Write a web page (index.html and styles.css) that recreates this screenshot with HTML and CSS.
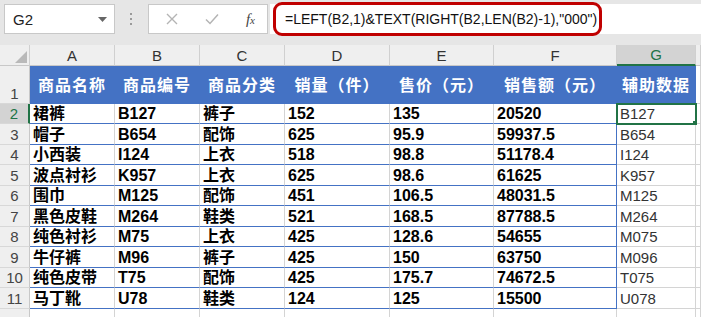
FILE: index.html
```html
<!DOCTYPE html>
<html lang="zh-CN">
<head>
    <meta charset="UTF-8">
    <title>辅助数据</title>
    <link rel="stylesheet" href="styles.css">
</head>
<body>
    <div class="toolbar">
        <div class="namebox">
            <span>G2</span>
            <svg class="caret" width="9" height="5" viewBox="0 0 9 5"><path d="M0 0h9L4.5 5z" fill="#666"/></svg>
        </div>
        <div class="grip">
            <svg width="3" height="12" viewBox="0 0 3 12"><rect x="0" y="0" width="2" height="2" fill="#9a9a9a"/><rect x="0" y="5" width="2" height="2" fill="#9a9a9a"/><rect x="0" y="10" width="2" height="2" fill="#9a9a9a"/></svg>
        </div>
        <div class="fxbox">
            <svg width="12" height="12" viewBox="0 0 12 12"><path d="M1 1l10 10M11 1L1 11" stroke="#b4b4b4" stroke-width="1.4"/></svg>
            <svg width="14" height="12" viewBox="0 0 14 12"><path d="M1 6.5l4 4L13 1.5" stroke="#b4b4b4" stroke-width="1.5" fill="none"/></svg>
            <span class="fx">f<span>x</span></span>
        </div>
        <div class="formula">
            <span class="formula-text">=LEFT(B2,1)&amp;TEXT(RIGHT(B2,LEN(B2)-1),"000")</span>
        </div>
    </div>

    <table class="sheet">
        <colgroup>
            <col class="c-rh"><col class="c-a"><col class="c-b"><col class="c-c"><col class="c-d"><col class="c-e"><col class="c-f"><col class="c-g"><col class="c-h">
        </colgroup>
        <tr class="colhead">
            <td class="corner"><svg width="12" height="12" viewBox="0 0 12 12"><path d="M12 0v12H0z" fill="#b9b9b9"/></svg></td>
            <td>A</td><td>B</td><td>C</td><td>D</td><td>E</td><td>F</td><td class="active">G</td><td></td>
        </tr>
        <tr class="head">
            <td class="rh">1</td>
            <td>商品名称</td><td>商品编号</td><td>商品分类</td><td>销量（件）</td><td>售价（元）</td><td>销售额（元）</td><td>辅助数据</td><td class="blank"></td>
        </tr>
        <tr class="row">
            <td class="rh active">2</td>
            <td>裙裤</td><td>B127</td><td>裤子</td><td>152</td><td>135</td><td class="last">20520</td><td class="aux selected">B127</td><td class="blank"></td>
        </tr>
        <tr class="row">
            <td class="rh">3</td>
            <td>帽子</td><td>B654</td><td>配饰</td><td>625</td><td>95.9</td><td class="last">59937.5</td><td class="aux">B654</td><td class="blank"></td>
        </tr>
        <tr class="row">
            <td class="rh">4</td>
            <td>小西装</td><td>I124</td><td>上衣</td><td>518</td><td>98.8</td><td class="last">51178.4</td><td class="aux">I124</td><td class="blank"></td>
        </tr>
        <tr class="row">
            <td class="rh">5</td>
            <td>波点衬衫</td><td>K957</td><td>上衣</td><td>625</td><td>98.6</td><td class="last">61625</td><td class="aux">K957</td><td class="blank"></td>
        </tr>
        <tr class="row">
            <td class="rh">6</td>
            <td>围巾</td><td>M125</td><td>配饰</td><td>451</td><td>106.5</td><td class="last">48031.5</td><td class="aux">M125</td><td class="blank"></td>
        </tr>
        <tr class="row">
            <td class="rh">7</td>
            <td>黑色皮鞋</td><td>M264</td><td>鞋类</td><td>521</td><td>168.5</td><td class="last">87788.5</td><td class="aux">M264</td><td class="blank"></td>
        </tr>
        <tr class="row">
            <td class="rh">8</td>
            <td>纯色衬衫</td><td>M75</td><td>上衣</td><td>425</td><td>128.6</td><td class="last">54655</td><td class="aux">M075</td><td class="blank"></td>
        </tr>
        <tr class="row">
            <td class="rh">9</td>
            <td>牛仔裤</td><td>M96</td><td>裤子</td><td>425</td><td>150</td><td class="last">63750</td><td class="aux">M096</td><td class="blank"></td>
        </tr>
        <tr class="row">
            <td class="rh">10</td>
            <td>纯色皮带</td><td>T75</td><td>配饰</td><td>425</td><td>175.7</td><td class="last">74672.5</td><td class="aux">T075</td><td class="blank"></td>
        </tr>
        <tr class="row">
            <td class="rh">11</td>
            <td>马丁靴</td><td>U78</td><td>鞋类</td><td>124</td><td>125</td><td class="last">15500</td><td class="aux">U078</td><td class="blank"></td>
        </tr>
        <tr class="tail">
            <td class="rh"></td><td></td><td></td><td></td><td></td><td></td><td></td><td></td><td></td>
        </tr>
    </table>
</body>
</html>
```

FILE: styles.css
```css
body { margin: 0; background: #ffffff; font-family: "Liberation Sans", "Noto Sans CJK SC", sans-serif; overflow: hidden; }

/* formula bar */
.toolbar { display: flex; align-items: flex-start; height: 45px; padding-top: 4px; box-sizing: border-box; background: #e6e6e6; }
.namebox { display: flex; align-items: center; justify-content: space-between; width: 111px; height: 30px; margin-left: 4px; padding: 0 7px 0 8px; box-sizing: border-box; background: #fff; border: 1px solid #c8c8c8; font-size: 15px; color: #222; }
.grip { display: flex; align-items: center; justify-content: center; width: 33px; height: 30px; }
.fxbox { display: flex; align-items: center; justify-content: space-between; width: 120px; height: 30px; padding: 0 12px 0 17px; box-sizing: border-box; background: #fff; border: 1px solid #c8c8c8; }
.fx { font-family: "Liberation Serif", serif; font-style: italic; font-size: 15px; color: #444; }
.fx span { font-size: 11px; }
.formula { flex: 1; height: 30px; margin-left: 2px; background: #fff; }
.formula-text { display: inline-block; height: 34px; margin: -2px 0 0 3px; padding: 0 0 0 9px; width: 329px; box-sizing: border-box; border: 3px solid #c00000; border-radius: 9px; font-size: 14px; line-height: 28px; color: #111; white-space: nowrap; }

/* grid */
.sheet { border-collapse: separate; border-spacing: 0; table-layout: fixed; width: 701px; }
.sheet td { box-sizing: border-box; padding: 0 0 0 3px; border-right: 1px solid #d4d4d4; border-bottom: 1px solid #d4d4d4; white-space: nowrap; overflow: hidden; font-size: 15px; line-height: 17px; }
.c-rh { width: 30px; } .c-a { width: 85px; } .c-b { width: 85px; } .c-c { width: 85px; } .c-d { width: 105px; }
.c-e { width: 104px; } .c-f { width: 123px; } .c-g { width: 79px; } .c-h { width: 5px; }

.colhead td { height: 21px; background: #efefef; border-right-color: #d0d0d0; border-bottom-color: #c8c8c8; text-align: center; padding: 0; color: #333; }
.colhead td.corner { text-align: right; vertical-align: bottom; padding: 0 2px 2px 0; line-height: 0; }
.colhead td.active { background: #d3d3d3; color: #217346; border-bottom: 2px solid #217346; }

.sheet td.rh { background: #efefef; text-align: center; padding: 0; color: #444; border-right-color: #c8c8c8; border-bottom-color: #d8d8d8; font-weight: normal; font-size: 15px; }
.sheet td.rh.active { background: #d3d3d3; color: #217346; border-right: 2px solid #217346; }

.head td { height: 38px; background: #4472c4; border-right-color: #4472c4; border-bottom-color: #4472c4; color: #fff; font-weight: bold; font-size: 16px; letter-spacing: 1px; text-align: center; padding: 2px 0 0; }
.head td.rh { vertical-align: bottom; letter-spacing: 0; padding-bottom: 1px; }
.head td.blank, .row td.blank { background: #fff; border-right-color: #d4d4d4; border-bottom-color: #d4d4d4; }

.row td { height: 21px; border-bottom-color: #4472c4; font-weight: bold; font-size: 16px; color: #000; }
.row:nth-child(odd) td { height: 20px; }
.row td.last { border-right-color: #4472c4; }
.row td.aux { font-weight: normal; font-size: 15px; color: #333; border-bottom-color: #d4d4d4; }
.row td.selected { position: relative; outline: 2px solid #217346; outline-offset: -1px; }
.row td.selected::after { content: ""; position: absolute; right: -4px; bottom: -4px; width: 5px; height: 5px; background: #217346; border: 1px solid #fff; }

.tail td { height: 10px; }
```
